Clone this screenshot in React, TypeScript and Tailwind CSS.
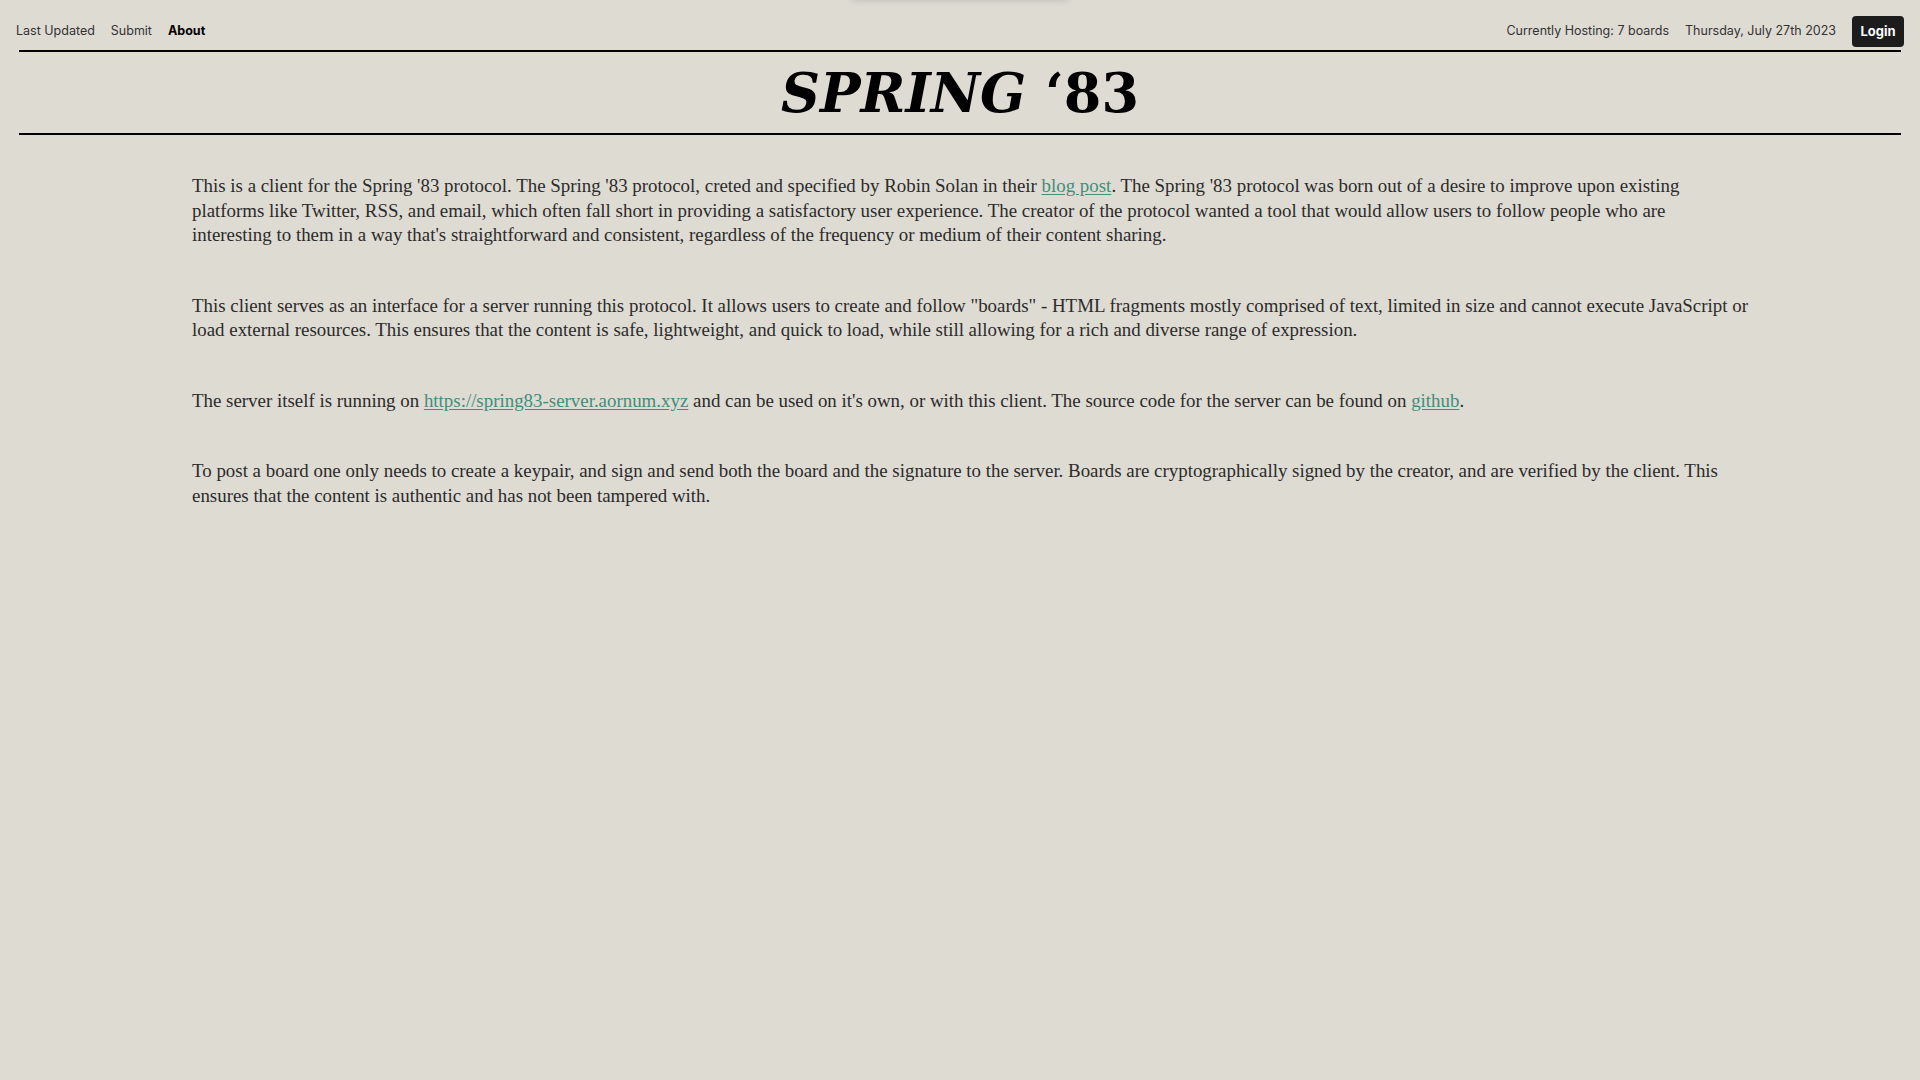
const Header: React.FC = () => {
    return (
        <div className="flex items-center justify-between px-4 pt-4 pb-[3px] font-['Inter',sans-serif] text-[12.5px] text-[#333]">
            <nav className="flex items-center gap-4">
                <a className="cursor-pointer">Last Updated</a>
                <a className="cursor-pointer">Submit</a>
                <a className="cursor-pointer font-bold text-black">About</a>
            </nav>
            <div className="flex items-center gap-4">
                <span>Currently Hosting: 7 boards</span>
                <span>Thursday, July 27th 2023</span>
                <button className="h-[31px] w-[52px] rounded bg-[#1c1c1c] text-[13px] font-bold text-white">Login</button>
            </div>
        </div>
    );
};

const Link: React.FC<{ children: React.ReactNode }> = ({ children }) => (
    <a className="cursor-pointer text-[#3f8f7a] underline underline-offset-2">{children}</a>
);

const App: React.FC = () => {
    return (
        <div className="relative min-h-screen w-full bg-[#dedbd3]">
            <div className="absolute -top-5 left-[850px] h-5 w-[220px] rounded-b-md shadow-[0_1px_6px_rgba(0,0,0,0.12)]" />
            <Header />
            <div className="mx-[19px] border-t-2 border-black" />
            <div className="mx-[19px] flex h-[83px] items-center justify-center border-b-2 border-black">
                <h1 className="font-['DejaVu_Serif',serif] text-[54px] font-bold leading-none text-black">
                    <span className="italic">SPRING</span> <span>‘83</span>
                </h1>
            </div>
            <main className="pl-[192px] pr-[171px] pt-[39px] font-['Liberation_Serif',serif] text-[18.9px] leading-[24.5px] text-[#2b2b2b]">
                <p className="mb-[46px]">
                    This is a client for the Spring '83 protocol. The Spring '83 protocol, creted and specified by Robin Solan in their <Link>blog post</Link>. The Spring '83 protocol was born out of a desire to improve upon existing platforms like Twitter, RSS, and email, which often fall short in providing a satisfactory user experience. The creator of the protocol wanted a tool that would allow users to follow people who are interesting to them in a way that's straightforward and consistent, regardless of the frequency or medium of their content sharing.
                </p>
                <p className="mb-[46px]">
                    This client serves as an interface for a server running this protocol. It allows users to create and follow "boards" - HTML fragments mostly comprised of text, limited in size and cannot execute JavaScript or load external resources. This ensures that the content is safe, lightweight, and quick to load, while still allowing for a rich and diverse range of expression.
                </p>
                <p className="mb-[46px]">
                    The server itself is running on <Link>https://spring83-server.aornum.xyz</Link> and can be used on it's own, or with this client. The source code for the server can be found on <Link>github</Link>.
                </p>
                <p>
                    To post a board one only needs to create a keypair, and sign and send both the board and the signature to the server. Boards are cryptographically signed by the creator, and are verified by the client. This ensures that the content is authentic and has not been tampered with.
                </p>
            </main>
        </div>
    );
};

export default App;
